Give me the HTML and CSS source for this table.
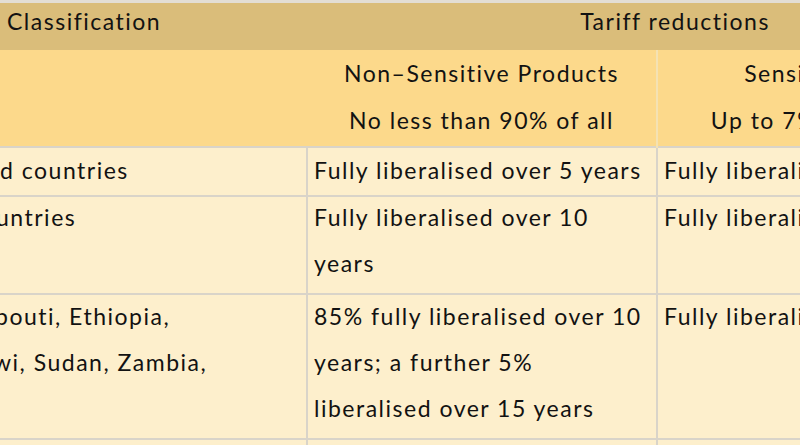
FILE: index.html
```html
<!DOCTYPE html>
<html lang="en">
<head>
<meta charset="utf-8">
<title>Tariff reductions</title>
<link rel="stylesheet" href="styles.css">
</head>
<body>
<div class="frame">
  <table class="tbl">
    <colgroup>
      <col class="c1">
      <col class="c2">
      <col class="c3">
    </colgroup>
    <thead>
      <tr class="hrow1">
        <th class="left">Classification</th>
        <th class="center" colspan="2">Tariff reductions</th>
      </tr>
      <tr class="hrow2">
        <th class="blank"></th>
        <th class="center sub">Non&ndash;Sensitive Products<br>No less than 90% of all</th>
        <th class="center sub">Sensitive Products<br>Up to 7% of all products</th>
      </tr>
    </thead>
    <tbody>
      <tr class="r1">
        <td class="first"><div class="cell">d countries</div></td>
        <td><div class="cell">Fully liberalised over 5 years</div></td>
        <td><div class="cell">Fully liberalised over 8 years</div></td>
      </tr>
      <tr class="r2">
        <td class="first"><div class="cell cut-a">untries</div></td>
        <td><div class="cell">Fully liberalised over 10<br>years</div></td>
        <td><div class="cell">Fully liberalised over 13 years</div></td>
      </tr>
      <tr class="r3">
        <td class="first">
          <div class="cell">
            <div class="cut-b">bouti, Ethiopia,</div>
            <div class="cut-c">wi, Sudan, Zambia,</div>
          </div>
        </td>
        <td><div class="cell">85% fully liberalised over 10<br>years; a further 5%<br>liberalised over 15 years</div></td>
        <td><div class="cell">Fully liberalised over 15 years</div></td>
      </tr>
      <tr class="r4">
        <td class="first"></td>
        <td></td>
        <td></td>
      </tr>
    </tbody>
  </table>
</div>
</body>
</html>
```

FILE: styles.css
```css
html, body {
  margin: 0;
  padding: 0;
}

body {
  width: 800px;
  height: 445px;
  overflow: hidden;
  background: #fdefcc;
  font-family: "Lato", "Open Sans", sans-serif;
  color: #121212;
}

.frame {
  border-top: 3px solid #e3ded4;
}

.tbl {
  border-collapse: collapse;
  table-layout: fixed;
  width: 1043px;
  font-size: 23px;
  letter-spacing: 1.5px;
}

.c1 { width: 307px; }
.c2 { width: 350px; }
.c3 { width: 386px; }

.tbl th,
.tbl td {
  padding: 0 6px;
  vertical-align: top;
  line-height: 46px;
  font-weight: normal;
  white-space: nowrap;
  overflow: hidden;
}

.left { text-align: left; }
.center { text-align: center; }

.hrow1 th {
  background: #dabd7a;
  height: 47px;
  line-height: 36px;
}

.hrow1 .left {
  padding-left: 7px;
}

.hrow2 th {
  background: #fcd98b;
  height: 96px;
  border-bottom: 1px solid #f6e6bd;
}

.hrow2 .sub {
  line-height: 47px;
}

.hrow2 .sub + .sub {
  border-left: 2px solid #f4e2b3;
}

.tbl td {
  background: #fdefcc;
  border: 2px solid #d9d4c9;
  text-align: left;
}

.tbl td.first {
  padding-left: 0;
  border-left: none;
}

.r1 td { height: 47px; }
.r2 td { height: 96px; }
.r3 td { height: 143px; }
.r4 td { height: 40px; }

.r1 .cell { margin-top: -1px; }
.r2 .cell { margin-top: -3px; }
.r3 .cell { margin-top: -2px; line-height: 46px; }

.cut-a { text-indent: -4px; }
.cut-b { text-indent: -5px; }
.cut-c { text-indent: -7px; }
```
